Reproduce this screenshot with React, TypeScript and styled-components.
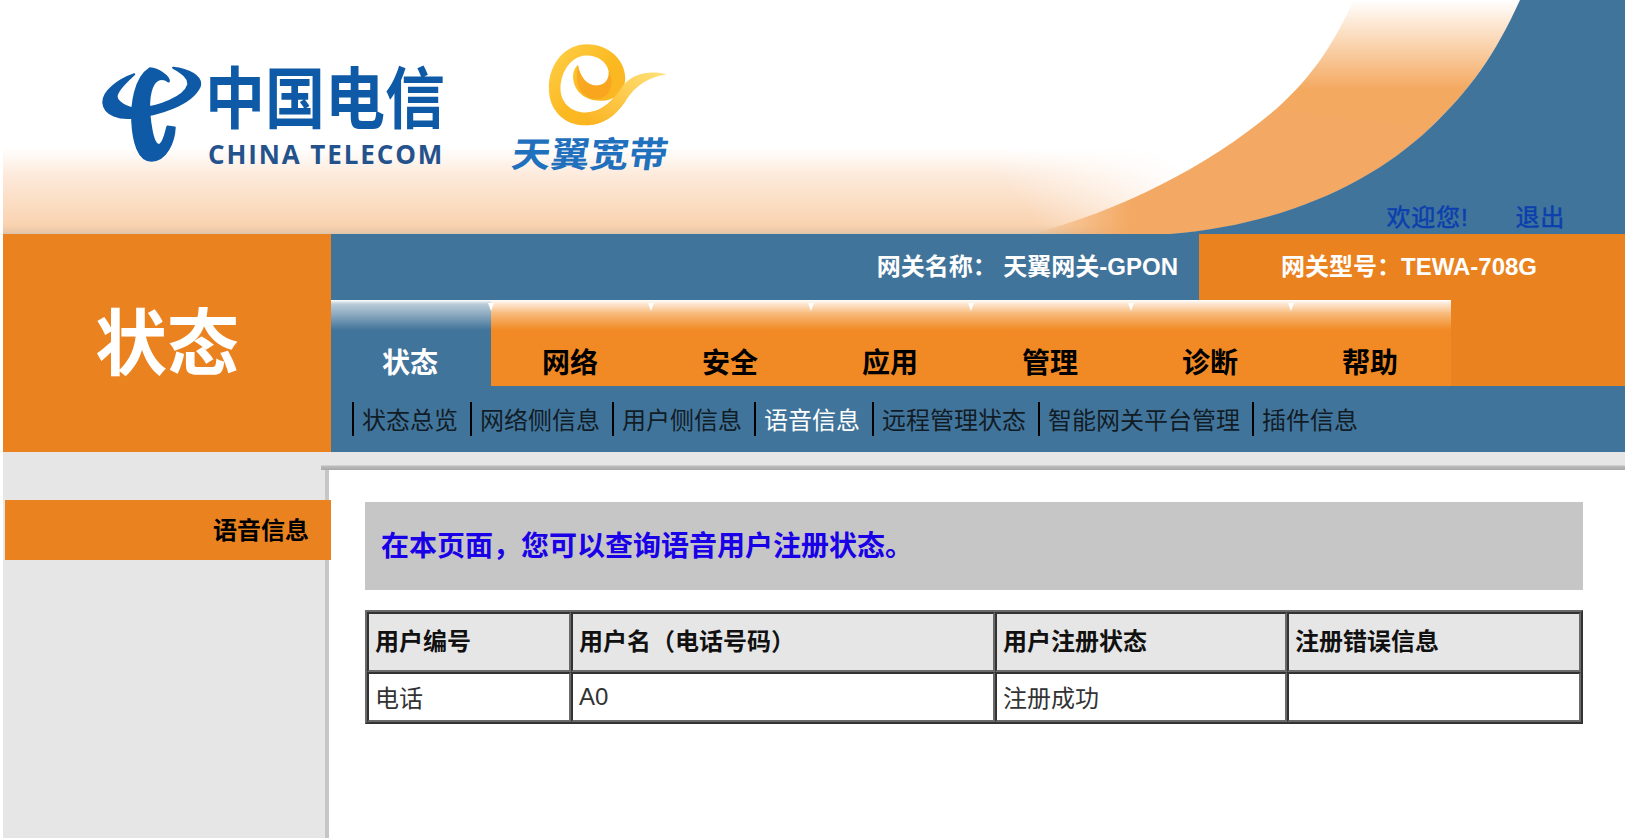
import React from 'react';
import styled, {createGlobalStyle} from "styled-components";

const tabs = ["状态", "网络", "安全", "应用", "管理", "诊断", "帮助"]
const subItems = ["状态总览", "网络侧信息", "用户侧信息", "语音信息", "远程管理状态", "智能网关平台管理", "插件信息"]

const GlobalStyle = createGlobalStyle`
  html, body {
    margin: 0;
    padding: 0;
    height: 100%;
    overflow: hidden;
    background: #ffffff;
  }
  body {
    font-family: "Liberation Sans", "Noto Sans CJK SC", sans-serif;
    font-size: 24px;
  }
`

const App = () => {
    return (
        <>
            <GlobalStyle />
            <Page>
                <Header>
                    <Swoosh viewBox="3 0 1622 234" preserveAspectRatio="none">
                        <defs>
                            <linearGradient id="crescent" x1="0" y1="0" x2="0" y2="1">
                                <stop offset="0" stopColor="#ffffff" />
                                <stop offset="0.1" stopColor="#fde8d4" />
                                <stop offset="0.38" stopColor="#f4a961" />
                                <stop offset="1" stopColor="#f3a963" />
                            </linearGradient>
                            <linearGradient id="tip" gradientUnits="userSpaceOnUse" x1="1030" y1="0" x2="1130" y2="0">
                                <stop offset="0" stopColor="#f3a963" stopOpacity="0" />
                                <stop offset="1" stopColor="#f3a963" stopOpacity="1" />
                            </linearGradient>
                            <linearGradient id="inner" gradientUnits="userSpaceOnUse" x1="1040" y1="225" x2="1150" y2="130">
                                <stop offset="0" stopColor="#ffffff" stopOpacity="0" />
                                <stop offset="1" stopColor="#ffffff" stopOpacity="1" />
                            </linearGradient>
                        </defs>
                        <path d="M1030 234 C1120 212 1210 165 1275 110 C1315 75 1335 40 1358 0 L1000 0 L1000 234Z" fill="url(#inner)" />
                        <path d="M1128 234 C1180 205 1240 150 1275 110 C1315 75 1335 40 1354 0 L1520 0 C1495 55 1470 90 1430 128 C1370 185 1280 225 1170 234Z" fill="url(#crescent)" />
                        <path d="M1030 234 C1120 212 1210 165 1275 110 L1430 128 C1370 185 1280 225 1170 234Z" fill="url(#tip)" />
                        <path d="M1170 234 C1280 225 1370 185 1430 128 C1470 90 1495 55 1520 0 L1625 0 L1625 234Z" fill="#41749a" />
                    </Swoosh>
                    <Brand>
                        <BrandMark viewBox="15 30 310 295">
                            <g fill="#0f5aa6" stroke="#0f5aa6" strokeWidth="6" strokeLinejoin="round">
                                <path d="M118 58 C70 75 22 110 25 145 C28 180 75 195 120 188 C190 180 290 150 315 95 C325 65 280 42 235 38 C250 48 285 65 280 90 C270 125 190 160 130 160 C95 162 65 140 65 125 C65 105 95 80 118 58Z" />
                                <path d="M165 40 C190 42 225 65 222 80 C205 68 190 70 178 85 C160 115 160 170 170 225 C175 255 185 275 195 270 C208 262 212 235 218 215 L240 218 C238 260 215 318 170 318 C130 318 115 260 112 200 C110 150 118 70 165 40Z" />
                            </g>
                        </BrandMark>
                        <Wordmark>
                            <WordmarkCn>中国电信</WordmarkCn>
                            <WordmarkEn>CHINA TELECOM</WordmarkEn>
                        </Wordmark>
                    </Brand>
                    <Tianyi>
                        <TianyiMark viewBox="0 0 525 280">
                            <defs>
                                <linearGradient id="ring" x1="0" y1="0" x2="1" y2="1">
                                    <stop offset="0" stopColor="#ffd04a" />
                                    <stop offset="0.55" stopColor="#fbb81f" />
                                    <stop offset="1" stopColor="#fbb52a" />
                                </linearGradient>
                                <linearGradient id="tail" x1="0" y1="1" x2="1" y2="0">
                                    <stop offset="0" stopColor="#fbb21e" />
                                    <stop offset="1" stopColor="#ffe27a" />
                                </linearGradient>
                            </defs>
                            <path fill="url(#ring)" d="M355 200 C325 245 285 272 235 272 C170 272 125 225 125 160 C125 85 175 28 240 28 C305 28 355 75 355 130 C355 170 325 198 280 198 C230 198 198 165 198 125 C198 110 205 95 213 90 C218 125 240 152 270 152 C295 152 308 130 305 110 C300 80 270 60 235 62 C195 65 162 105 160 160 C160 205 195 235 240 233 C290 230 320 195 350 150Z" />
                            <path fill="url(#tail)" d="M480 118 C430 125 385 150 355 200 C325 245 285 272 235 272 L240 233 C290 230 320 195 350 150 C380 115 430 105 480 118Z" />
                            <path fill="#f7941e" opacity="0.5" d="M213 90 C218 125 240 152 270 152 C295 152 308 130 305 110 C325 140 310 190 275 192 C230 195 198 160 213 90Z" />
                        </TianyiMark>
                        <TianyiName>天翼宽带</TianyiName>
                    </Tianyi>
                    <Welcome>
                        <WelcomeLink>欢迎您!</WelcomeLink>
                        <WelcomeLink>退出</WelcomeLink>
                    </Welcome>
                </Header>

                <NavBand>
                    <SectionTitle>状态</SectionTitle>
                    <NavColumn>
                        <GatewayRow>
                            <GatewayName>网关名称：&nbsp;天翼网关-GPON</GatewayName>
                            <GatewayModel>网关型号：TEWA-708G</GatewayModel>
                        </GatewayRow>
                        <TabRow>
                            {tabs.map((tab, i) =>
                                <Tab key={tab} $active={i === 0}>{tab}</Tab>
                            )}
                        </TabRow>
                        <SubNav>
                            {subItems.map(item =>
                                <SubItem key={item} $active={item === "语音信息"}>{item}</SubItem>
                            )}
                        </SubNav>
                    </NavColumn>
                </NavBand>

                <Body>
                    <Sidebar>
                        <SideItem>语音信息</SideItem>
                    </Sidebar>
                    <Main>
                        <TopShade />
                        <Content>
                            <Notice>在本页面，您可以查询语音用户注册状态。</Notice>
                            <StatusTable>
                                <colgroup>
                                    <col style={{width: 204}} />
                                    <col style={{width: 424}} />
                                    <col style={{width: 292}} />
                                    <col />
                                </colgroup>
                                <thead>
                                    <tr>
                                        <HeadCell>用户编号</HeadCell>
                                        <HeadCell>用户名（电话号码）</HeadCell>
                                        <HeadCell>用户注册状态</HeadCell>
                                        <HeadCell>注册错误信息</HeadCell>
                                    </tr>
                                </thead>
                                <tbody>
                                    <tr>
                                        <DataCell>电话</DataCell>
                                        <DataCell>A0</DataCell>
                                        <DataCell>注册成功</DataCell>
                                        <DataCell></DataCell>
                                    </tr>
                                </tbody>
                            </StatusTable>
                        </Content>
                    </Main>
                </Body>
            </Page>
        </>
    );
};

export default App;

const Page = styled.div`
  height: 838px;
  padding-left: 3px;
  display: flex;
  flex-direction: column;
  overflow: hidden;
`
const Header = styled.header`
  position: relative;
  flex: none;
  height: 234px;
  display: flex;
  align-items: flex-start;
  background: linear-gradient(180deg, #ffffff 0, #ffffff 148px, #fdeadb 175px, #f9d3b0 225px, #e9c7a8 232px, #d9c4b0 234px);
`
const Swoosh = styled.svg`
  position: absolute;
  inset: 0;
  width: 100%;
  height: 100%;
`
const Brand = styled.div`
  position: relative;
  display: flex;
  align-items: flex-start;
  margin: 65px 0 0 97px;
`
const BrandMark = styled.svg`
  width: 103px;
  height: 98px;
`
const Wordmark = styled.div`
  display: flex;
  flex-direction: column;
  margin-left: 2px;
`
const WordmarkCn = styled.div`
  width: 240px;
  height: 72px;
  font-size: 60px;
  line-height: 72px;
  font-weight: 700;
  color: #0f5aa6;
  transform: scaleY(1.12);
  white-space: nowrap;
`
const WordmarkEn = styled.div`
  margin: 7px 0 0 3px;
  font-family: "Open Sans", sans-serif;
  font-size: 26px;
  line-height: 20px;
  font-weight: 700;
  letter-spacing: 1.9px;
  color: #24528c;
  white-space: nowrap;
`
const Tianyi = styled.div`
  position: relative;
  display: flex;
  flex-direction: column;
  margin: 35px 0 0 62px;
`
const TianyiMark = styled.svg`
  width: 175px;
  height: 93px;
`
const TianyiName = styled.div`
  margin: 8px 0 0 5px;
  font-size: 39px;
  line-height: 38px;
  font-weight: 700;
  color: #1f70bd;
  white-space: nowrap;
  transform: skewX(-8deg) scaleY(0.9);
`
const Welcome = styled.div`
  position: relative;
  display: flex;
  gap: 47px;
  align-self: flex-end;
  margin-left: auto;
  padding: 0 60px 0 0;
`
const WelcomeLink = styled.a`
  font-size: 24px;
  line-height: 32px;
  letter-spacing: 0.8px;
  color: #0b3fae;
  -webkit-text-stroke: 0.5px #0b3fae;
`
const NavBand = styled.div`
  flex: none;
  height: 218px;
  display: flex;
`
const SectionTitle = styled.div`
  flex: none;
  width: 328px;
  box-sizing: border-box;
  padding-bottom: 12px;
  display: flex;
  align-items: center;
  justify-content: center;
  background: #ea831f;
  color: #ffffff;
  font-size: 72px;
  font-weight: 700;
`
const NavColumn = styled.div`
  flex: 1;
  display: flex;
  flex-direction: column;
  background: #41749a;
`
const GatewayRow = styled.div`
  height: 66px;
  display: flex;
  color: #ffffff;
  font-weight: 700;
  line-height: 66px;
`
const GatewayName = styled.div`
  flex: 1;
  padding-right: 21px;
  text-align: right;
  white-space: nowrap;
`
const GatewayModel = styled.div`
  flex: none;
  width: 426px;
  box-sizing: border-box;
  padding-left: 82px;
  background: #ea831f;
  white-space: nowrap;
`
const TabRow = styled.nav`
  height: 86px;
  display: flex;
  background: #ea831f;
`
const Tab = styled.a<{$active?: boolean}>`
  position: relative;
  flex: none;
  width: 160px;
  box-sizing: border-box;
  display: flex;
  align-items: flex-end;
  justify-content: center;
  padding: 0 2px 4px 0;
  font-size: 28px;
  line-height: 36px;
  font-weight: 700;
  color: ${p => p.$active ? "#ffffff" : "#000000"};
  background: ${p => p.$active
    ? "linear-gradient(180deg, #ffffff 0, #b9ccd9 4px, #8eabc1 14px, #41749a 30px)"
    : "linear-gradient(180deg, #ffffff 0, #fde6cf 4px, #f7b877 14px, #f18a24 30px)"};
  &::after {
    content: "";
    position: absolute;
    top: 3px;
    right: -3px;
    width: 6px;
    height: 8px;
    background: #ffffff;
    clip-path: polygon(0 0, 100% 0, 50% 100%);
    z-index: 1;
  }
  &:last-child::after {
    display: none;
  }
`
const SubNav = styled.div`
  flex: 1;
  display: flex;
  align-items: center;
  padding-left: 21px;
`
const SubItem = styled.a<{$active?: boolean}>`
  height: 34px;
  display: flex;
  align-items: center;
  padding: 0 12px 2px 8px;
  box-sizing: border-box;
  border-left: 2px solid #000000;
  font-size: 24px;
  white-space: nowrap;
  color: ${p => p.$active ? "#ffffff" : "#111c26"};
`
const Body = styled.div`
  flex: 1;
  display: flex;
  min-height: 0;
`
const Sidebar = styled.aside`
  flex: none;
  width: 322px;
  padding-top: 48px;
  background: #e6e6e6;
  border-right: 4px solid #c6c6c6;
`
const SideItem = styled.div`
  position: relative;
  z-index: 2;
  height: 60px;
  margin: 0 -6px 0 2px;
  box-sizing: border-box;
  padding-right: 22px;
  text-align: right;
  line-height: 62px;
  font-size: 24px;
  font-weight: 700;
  color: #000000;
  background: #ea831f;
`
const Main = styled.main`
  flex: 1;
  min-width: 0;
  display: flex;
  flex-direction: column;
`
const TopShade = styled.div`
  position: relative;
  z-index: 1;
  flex: none;
  height: 18px;
  margin-left: -8px;
  background: linear-gradient(180deg, #e6e6e6 0, #e6e6e6 13px, #bcbcbc 14px, #a8a8a8 18px);
`
const Content = styled.div`
  padding: 32px 42px 0 36px;
  display: flex;
  flex-direction: column;
  gap: 20px;
`
const Notice = styled.div`
  height: 88px;
  box-sizing: border-box;
  padding: 0 0 4px 16px;
  display: flex;
  align-items: center;
  background: #c6c6c6;
  color: #1a00e6;
  font-size: 28px;
  font-weight: 700;
`
const StatusTable = styled.table`
  width: 100%;
  table-layout: fixed;
  border-collapse: separate;
  border-spacing: 0;
  border-style: solid;
  border-width: 2px;
  border-color: #6a6a6a #333333 #333333 #6a6a6a;
`
const HeadCell = styled.th`
  height: 50px;
  padding: 0 0 6px 6px;
  text-align: left;
  font-size: 24px;
  font-weight: 700;
  color: #111111;
  background: #e6e6e6;
  border-style: solid;
  border-width: 2px;
  border-color: #333333 #6a6a6a #6a6a6a #333333;
`
const DataCell = styled.td`
  height: 45px;
  padding: 0 0 1px 6px;
  font-size: 24px;
  color: #333333;
  background: #ffffff;
  border-style: solid;
  border-width: 2px;
  border-color: #333333 #6a6a6a #6a6a6a #333333;
`
